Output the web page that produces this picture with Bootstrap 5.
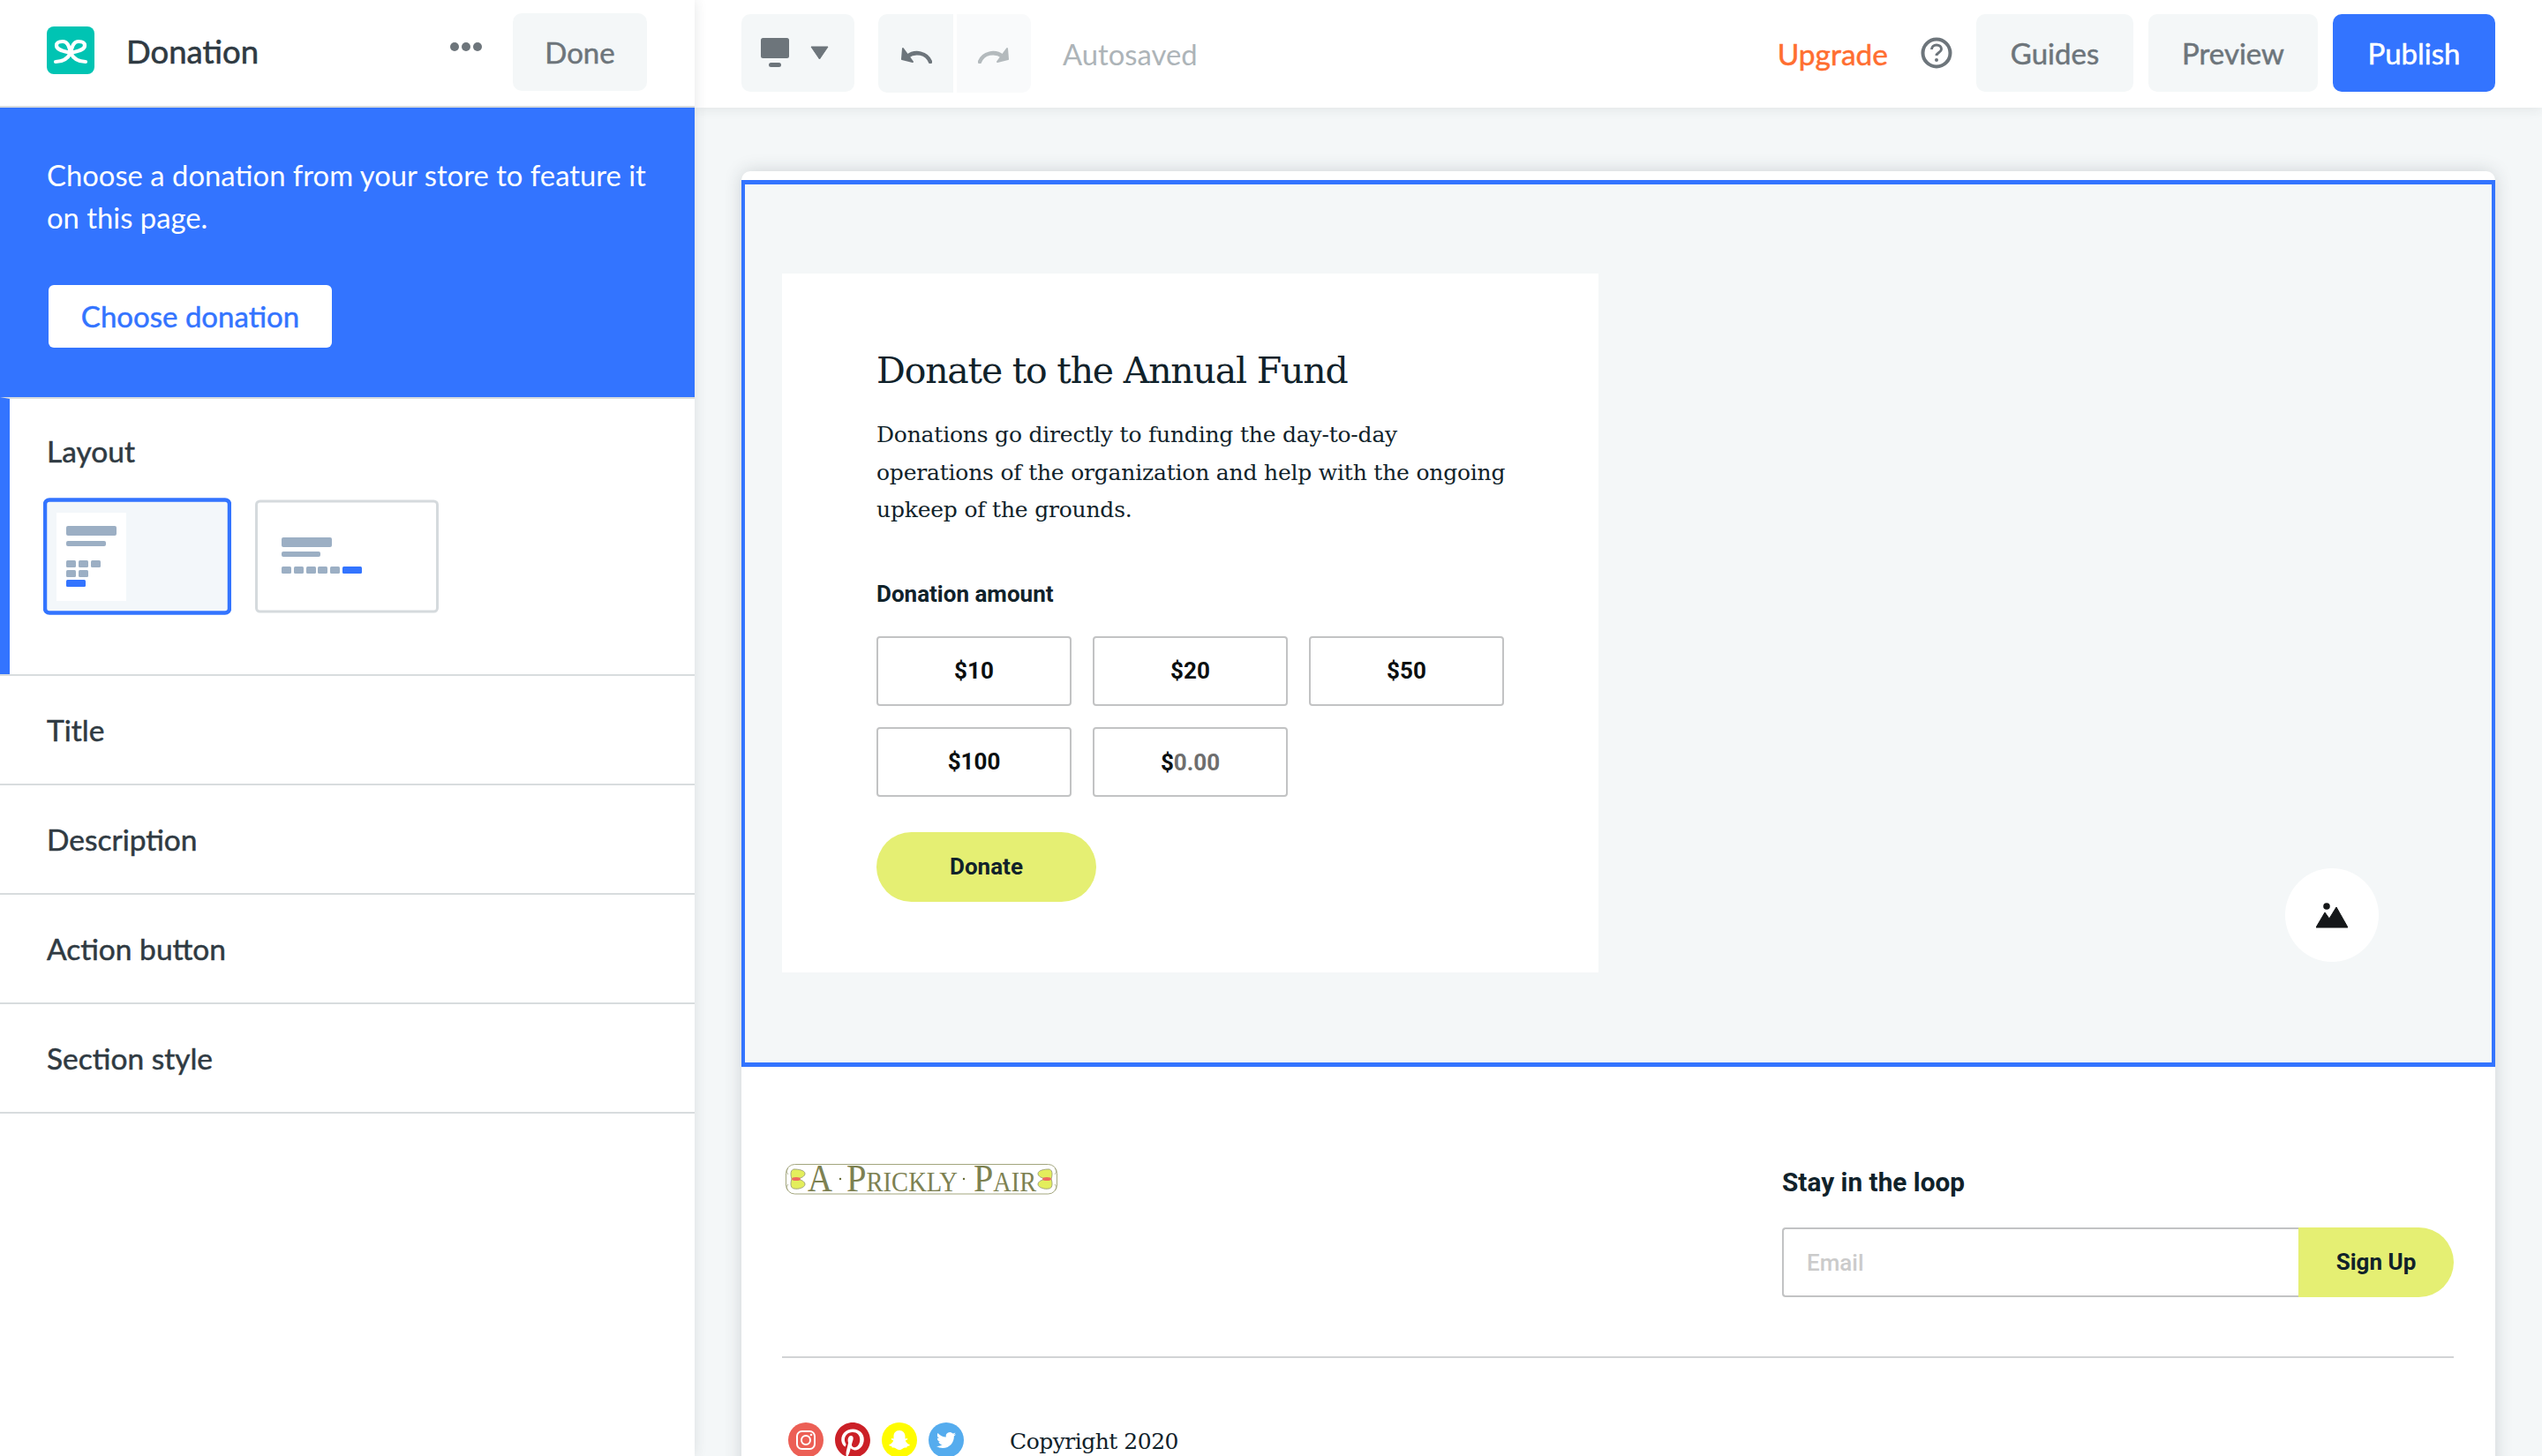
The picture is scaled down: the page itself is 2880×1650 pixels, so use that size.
<!doctype html>
<html lang="en">
<head>
<meta charset="utf-8">
<title>Donation</title>
<link href="https://cdn.jsdelivr.net/npm/bootstrap@5.3.0/dist/css/bootstrap.min.css" rel="stylesheet">
<style>
html,body{height:100%;}
body{width:2880px;height:1650px;overflow:hidden;background:#f4f7f8;font-family:Lato,"Liberation Sans",sans-serif;color:#2f3a42;}
.app-side{width:787px;height:1650px;background:#fff;box-shadow:0 0 14px rgba(40,50,60,.12);z-index:3;flex:none;}
.side-head{height:122px;padding:15px 54px 0 53px;border-bottom:2px solid #d8dcde;}
.side-logo{width:54px;height:54px;margin-top:15px;border-radius:8px;background:#00c4b3;flex:none;}
.side-title{margin:13px 0 0 36px;font-size:36.5px;font-weight:400;line-height:60px;color:#2f3a42;-webkit-text-stroke:.6px #2f3a42;}
.more-dots{margin-right:35px;margin-top:8px;}
.gray-btn{background:#f4f7f8;border:0;color:#6d757b;font-size:33px;font-weight:400;height:88px;border-radius:10px;padding:2px 0 0;-webkit-text-stroke:.5px #6d757b;}
.gray-btn:hover{background:#f4f7f8;color:#6d757b;}
.done-btn{width:152px;}
.side-promo{background:#3374ff;color:#fff;height:328px;padding:53px 53px 0;}
.side-promo p{font-size:32.8px;line-height:47.5px;margin:0 0 53px;font-weight:400;white-space:nowrap;}
.choose-btn{background:#fff;border:0;color:#3374ff;width:321px;height:71px;font-size:33px;font-weight:400;border-radius:6px;padding:0;margin-left:2px;-webkit-text-stroke:.5px #3374ff;}
.choose-btn:hover{background:#fff;color:#3374ff;}
.side-row{height:124px;border-top:2px solid #d8dcde;padding:0 0 0 53px;display:flex;align-items:center;font-size:33.5px;font-weight:400;color:#2f3a42;-webkit-text-stroke:.5px #2f3a42;}
.side-row:last-child{border-bottom:2px solid #d8dcde;height:126px;}
.layout-row{height:314px;border-top:2px solid #d8dcde;border-left:11px solid #3374ff;padding:37px 0 0 42px;font-size:33.5px;font-weight:400;-webkit-text-stroke:.5px #2f3a42;}
.layout-label{line-height:44px;margin-bottom:31px;}
.thumb-wrap{gap:27px;margin-left:-4px;}
.thumb-wrap svg{display:block;}
.thumb-alt{margin-top:2px;}
.app-main{flex:1 1 auto;min-width:0;height:1650px;}
.top-bar{height:122px;background:#fff;padding:16px 53px 0;box-shadow:0 2px 12px rgba(40,50,60,.09);position:relative;z-index:2;}
.device-btn{width:128px;background:#f4f7f8;height:88px;border-radius:10px;padding:0 0 0 22px;gap:24px;}
.hist-grp{margin-left:27px;gap:4px;}
.undo-btn,.redo-btn{width:85px;height:89px;border:0;border-radius:10px 0 0 10px;background:#f4f7f8;padding:0;}
.redo-btn{width:84px;border-radius:0 10px 10px 0;background:#f9fafb;}
.undo-btn:hover{background:#f4f7f8;}.redo-btn:hover{background:#f9fafb;}
.auto-txt{margin-left:36px;font-size:32.8px;color:#adb4b8;line-height:92px;}
.upgrade{color:#ff6e30;font-size:33.5px;font-weight:400;margin-right:37px;line-height:90px;-webkit-text-stroke:.5px #ff6e30;}
.help-ico{margin-right:27px;margin-top:26px;display:block;}
.guides-btn{width:178px;margin-right:17px;}
.preview-btn{width:192px;margin-right:17px;}
.publish-btn{width:184px;height:88px;background:#3374ff;border:0;color:#fff;font-size:33px;font-weight:400;border-radius:10px;padding:2px 0 0;-webkit-text-stroke:.5px #fff;}
.publish-btn:hover{background:#3374ff;color:#fff;}
.canvas-wrap{padding:72px 53px 0;}
.site-page{background:#fff;border-radius:10px 10px 0 0;padding-top:10px;box-shadow:0 0 20px rgba(40,50,60,.18);height:1500px;}
.hero-sec{position:relative;height:1005px;background:#f4f7f8;border:solid #3374ff;border-width:5px 4px;padding:101px 0 0 42px;}
.don-card{width:925px;height:792px;background:#fff;padding:82px 106px 0 107px;}
.don-title{font-family:"DejaVu Serif",serif;font-size:41px;font-weight:400;line-height:56px;color:#10222a;margin:0 0 24px;letter-spacing:-1.2px;white-space:nowrap;}
.don-desc{font-family:"DejaVu Serif",serif;font-size:25px;line-height:42.6px;color:#10222a;margin:0 0 56px;letter-spacing:-.2px;white-space:nowrap;}
.don-label{font-family:Roboto,sans-serif;font-weight:700;font-size:26px;line-height:34px;color:#10222a;margin-bottom:31px;}
.amt-grid{display:grid;grid-template-columns:repeat(3,221px);grid-auto-rows:79px;gap:24px;}
.amt-box{border:2px solid #c2c3c4;border-radius:4px;font-family:Roboto,sans-serif;font-weight:700;font-size:26px;color:#0b0f10;display:flex;align-items:center;justify-content:center;background:#fff;}
.amt-custom{padding-top:2px;}
.amt-box em{font-style:normal;color:#6e6e6e;font-weight:700;}
.pill-btn{background:#e5ef73;border:0;color:#10222a;font-family:Roboto,sans-serif;font-weight:700;font-size:26px;border-radius:40px;padding:0;}
.pill-btn:hover{background:#e5ef73;color:#10222a;}
.donate-btn{width:249px;height:79px;margin-top:40px;}
.pic-btn{position:absolute;left:1745px;top:775px;width:106px;height:106px;border-radius:50%;background:#fff;display:flex;align-items:center;justify-content:center;}
.foot-top{padding:100px 47px 0 46px;height:328px;}
.brand-box{margin-left:4px;flex:none;}
.brand-box svg{display:block;overflow:visible;}
.brand-txt{font-family:"Liberation Serif",serif;font-variant:small-caps;font-size:44px;fill:#7d8152;}
.loop-box{width:761px;margin-top:10px;}
.loop-ttl{font-family:Roboto,sans-serif;font-weight:700;font-size:29.8px;line-height:38px;color:#10222a;margin:2px 0 32px;}
.loop-input{height:79px;border:2px solid #c2c3c4;border-right:0;border-radius:4px 0 0 4px;font-family:Roboto,sans-serif;font-size:26px;font-weight:500;padding:0 26px;}
.loop-input::placeholder{color:#cbcbcb;}
.signup-btn{width:176px;height:79px;border-radius:0 40px 40px 0!important;flex:none;}
.foot-rule{margin:0 47px 0 46px;border-top:2px solid #d2d4d5;}
.foot-end{padding:73px 0 0 53px;}
.soc-list{gap:13px;}
.soc-list svg{display:block;}
.copy-txt{font-family:"DejaVu Serif",serif;font-size:25px;color:#10222a;margin-left:52px;line-height:44px;letter-spacing:-.5px;}
</style>
</head>
<body class="d-flex">
<aside class="app-side">
  <div class="side-head d-flex align-items-start">
    <svg class="side-logo" viewBox="0 0 54 54" aria-hidden="true"><g fill="none" stroke="#fff" stroke-width="4.2" stroke-linecap="round"><path d="M27 30C20 28 11 27 11 21.5 11 17.5 15 17 18 17 23 17 25 21 27 30Z"/><path d="M27 30C34 28 43 27 43 21.5 43 17.5 39 17 36 17 31 17 29 21 27 30Z"/><path d="M27 30C24 36 19 40 10 40"/><path d="M27 30C30 36 35 40 44 40"/></g></svg>
    <h1 class="side-title">Donation</h1>
    <svg class="more-dots ms-auto" width="36" height="60" viewBox="0 0 36 60" aria-hidden="true"><g fill="#6d757b"><circle cx="5" cy="30" r="5"/><circle cx="18" cy="30" r="5"/><circle cx="31" cy="30" r="5"/></g></svg>
    <button class="btn gray-btn done-btn" type="button">Done</button>
  </div>
  <div class="side-promo">
    <p>Choose a donation from your store to feature it<br>on this page.</p>
    <button class="btn choose-btn" type="button">Choose donation</button>
  </div>
  <div class="layout-row">
    <div class="layout-label">Layout</div>
    <div class="d-flex thumb-wrap">
      <svg width="213" height="133" viewBox="0 0 213 133" aria-hidden="true">
        <rect x="2" y="2.500" width="209" height="128" rx="5" fill="#f3f7fa" stroke="#3374ff" stroke-width="4.500"/>
        <rect x="15" y="17" width="79" height="100" fill="#fff"/>
        <g fill="#9cafc4"><rect x="26" y="32" width="57" height="11" rx="2"/><rect x="26" y="49" width="45" height="6" rx="2"/>
        <rect x="26" y="71" width="11" height="8" rx="1.500"/><rect x="40" y="71" width="11" height="8" rx="1.500"/><rect x="54" y="71" width="11" height="8" rx="1.500"/>
        <rect x="26" y="82" width="11" height="8" rx="1.500"/><rect x="40" y="82" width="11" height="8" rx="1.500"/></g>
        <rect x="26" y="93" width="22" height="8" rx="1.500" fill="#3374ff"/>
      </svg>
      <svg class="thumb-alt" width="208" height="129" viewBox="0 0 208 129" aria-hidden="true">
        <rect x="1.500" y="2" width="205" height="125" rx="4" fill="#fff" stroke="#d5dadd" stroke-width="3"/>
        <g fill="#9cafc4"><rect x="30" y="43" width="57" height="11" rx="2"/><rect x="30" y="59" width="44" height="6" rx="2"/>
        <rect x="30" y="76" width="11" height="8" rx="1.500"/><rect x="44" y="76" width="11" height="8" rx="1.500"/><rect x="58" y="76" width="11" height="8" rx="1.500"/><rect x="71" y="76" width="11" height="8" rx="1.500"/><rect x="85" y="76" width="11" height="8" rx="1.500"/></g>
        <rect x="99" y="76" width="22" height="8" rx="1.500" fill="#3374ff"/>
      </svg>
    </div>
  </div>
  <div class="side-row">Title</div>
  <div class="side-row">Description</div>
  <div class="side-row">Action button</div>
  <div class="side-row">Section style</div>
</aside>
<main class="app-main">
  <div class="top-bar d-flex align-items-start">
    <div class="device-btn d-flex align-items-center">
      <svg width="32" height="34" viewBox="0 0 32 34" aria-hidden="true"><rect width="32" height="23" rx="2.500" fill="#6d757b"/><rect x="9" y="28" width="14" height="5" rx="2.500" fill="#6d757b"/></svg>
      <svg width="21" height="16" viewBox="0 0 21 16" aria-hidden="true"><path d="M1 1H20L10.500 15Z" fill="#6d757b" stroke="#6d757b" stroke-linejoin="round"/></svg>
    </div>
    <div class="hist-grp d-flex">
      <button class="btn undo-btn" type="button" aria-label="Undo"><svg width="36" height="20" viewBox="0 0 36 20"><path d="M34 18C30 8 17 5 8 12" fill="none" stroke="#6d757b" stroke-width="4.500" stroke-linecap="round"/><path d="M3 3 2 15 14 18Z" fill="#6d757b" stroke="#6d757b" stroke-width="2" stroke-linejoin="round"/></svg></button>
      <button class="btn redo-btn" type="button" aria-label="Redo"><svg width="36" height="20" viewBox="0 0 36 20"><path d="M2 18C6 8 19 5 28 12" fill="none" stroke="#b4babd" stroke-width="4.500" stroke-linecap="round"/><path d="M33 3 34 15 22 18Z" fill="#b4babd" stroke="#b4babd" stroke-width="2" stroke-linejoin="round"/></svg></button>
    </div>
    <span class="auto-txt">Autosaved</span>
    <span class="upgrade ms-auto">Upgrade</span>
    <svg class="help-ico" width="36" height="36" viewBox="0 0 36 36" aria-hidden="true"><circle cx="18" cy="18" r="15.500" fill="none" stroke="#6d757b" stroke-width="4"/><path d="M12.500 14c0-3.200 2.500-5 5.500-5s5.500 1.800 5.500 4.800c0 3.700-5.500 3.700-5.500 7.200" fill="none" stroke="#6d757b" stroke-width="3"/><circle cx="18" cy="26" r="2" fill="#6d757b"/></svg>
    <button class="btn gray-btn guides-btn" type="button">Guides</button>
    <button class="btn gray-btn preview-btn" type="button">Preview</button>
    <button class="btn publish-btn" type="button">Publish</button>
  </div>
  <div class="canvas-wrap">
    <div class="site-page">
      <section class="hero-sec">
        <div class="don-card">
          <h2 class="don-title">Donate to the Annual Fund</h2>
          <p class="don-desc">Donations go directly to funding the day-to-day<br>operations of the organization and help with the ongoing<br>upkeep of the grounds.</p>
          <div class="don-label">Donation amount</div>
          <div class="amt-grid">
            <div class="amt-box">$10</div><div class="amt-box">$20</div><div class="amt-box">$50</div>
            <div class="amt-box">$100</div><div class="amt-box amt-custom">$<em>0.00</em></div>
          </div>
          <button class="btn pill-btn donate-btn" type="button">Donate</button>
        </div>
        <div class="pic-btn"><svg width="36" height="29" viewBox="0 0 36 29" aria-hidden="true"><circle cx="12" cy="4" r="3.800" fill="#151719"/><path d="M0 28 10 11 15 18 23 5 36 28Z" fill="#151719" stroke="#151719" stroke-linejoin="round"/></svg></div>
      </section>
      <div class="foot-top d-flex justify-content-between align-items-start">
        <div class="brand-box">
          <svg width="308" height="55" viewBox="0 -10 308 55" role="img" aria-label="A Prickly Pair">
            <rect x=".5" y=".5" width="307" height="33.500" rx="10" fill="#fff" stroke="#a3a67e"/>
            <defs><g id="flyWing"><path d="M3 5C1 7 1 10 3 12M3 23C1 25 1 28 3 30" fill="none" stroke="#a3a67e"/><path d="M7 17C5 11 6 6 10 6 14 6 22 7 22 11 22 14 18 16 13 17 18 18 22 20 22 23 22 27 14 29 10 28 6 28 5 23 7 17Z" fill="#e3ee5c" stroke="#a3a67e"/><ellipse cx="12" cy="17" rx="5" ry="2" fill="#ee6a5e"/></g></defs>
            <use href="#flyWing"/>
            <use href="#flyWing" transform="translate(308 0) scale(-1 1)"/>
            <text class="brand-txt" x="25" y="31" textLength="28" lengthAdjust="spacingAndGlyphs">A</text>
            <circle cx="62" cy="17" r="1.200" fill="#676b35"/>
            <text class="brand-txt" x="69" y="31" textLength="126" lengthAdjust="spacingAndGlyphs">Prickly</text>
            <circle cx="202" cy="17" r="1.200" fill="#676b35"/>
            <text class="brand-txt" x="213" y="31" textLength="71" lengthAdjust="spacingAndGlyphs">Pair</text>
          </svg>
        </div>
        <div class="loop-box">
          <div class="loop-ttl">Stay in the loop</div>
          <div class="input-group flex-nowrap">
            <input class="form-control loop-input" type="text" placeholder="Email" aria-label="Email">
            <button class="btn pill-btn signup-btn" type="button">Sign Up</button>
          </div>
        </div>
      </div>
      <div class="foot-rule"></div>
      <div class="foot-end d-flex align-items-start">
        <div class="d-flex soc-list">
          <svg width="40" height="40" viewBox="0 0 40 40" aria-hidden="true"><circle cx="20" cy="20" r="20" fill="#ec5f55"/><rect x="10" y="10" width="20" height="20" rx="5.500" fill="none" stroke="#fff" stroke-width="2"/><circle cx="20" cy="20" r="5" fill="none" stroke="#fff" stroke-width="2"/><circle cx="26" cy="14" r="1.300" fill="#fff"/></svg>
          <svg width="40" height="40" viewBox="0 0 24 24" aria-hidden="true"><circle cx="12" cy="12" r="12" fill="#fff"/><path fill="#cb2027" d="M12.017 0C5.396 0 .029 5.367.029 11.987c0 5.079 3.158 9.417 7.618 11.162-.105-.949-.199-2.403.041-3.439.219-.937 1.406-5.957 1.406-5.957s-.359-.72-.359-1.781c0-1.663.967-2.911 2.168-2.911 1.024 0 1.518.769 1.518 1.688 0 1.029-.653 2.567-.992 3.992-.285 1.193.6 2.165 1.775 2.165 2.128 0 3.768-2.245 3.768-5.487 0-2.861-2.063-4.869-5.008-4.869-3.41 0-5.409 2.562-5.409 5.199 0 1.033.394 2.143.889 2.741.099.12.112.225.085.345-.09.375-.293 1.199-.334 1.363-.053.225-.172.271-.401.165-1.495-.69-2.433-2.878-2.433-4.646 0-3.776 2.748-7.252 7.92-7.252 4.158 0 7.392 2.967 7.392 6.923 0 4.135-2.607 7.462-6.233 7.462-1.214 0-2.354-.629-2.758-1.379l-.749 2.848c-.269 1.045-1.004 2.352-1.498 3.146 1.123.345 2.306.535 3.55.535 6.607 0 11.985-5.365 11.985-11.987C23.97 5.39 18.592.026 11.985.026L12.017 0z"/></svg>
          <svg width="40" height="40" viewBox="0 0 40 40" aria-hidden="true"><circle cx="20" cy="20" r="20" fill="#fffc00"/><path fill="#fff" d="M20 9c4 0 6.500 3 6.500 6.500v3l2-.5c1 0 1 1 .3 1.500l-2 1c.7 2 2.500 4 5 4.700.4.8-1.500 1.500-3 1.800l-.5 1.500c-1.500-.2-3-.2-4.300 1-1.200.8-2.300 1.500-4 1.500s-2.800-.7-4-1.500c-1.300-1.200-2.800-1.200-4.300-1l-.5-1.500c-1.500-.3-3.400-1-3-1.800 2.500-.7 4.300-2.700 5-4.700l-2-1c-.7-.5-.7-1.500.3-1.500l2 .5v-3C13.500 12 16 9 20 9z"/></svg>
          <svg width="40" height="40" viewBox="0 0 40 40" aria-hidden="true"><circle cx="20" cy="20" r="20" fill="#55acee"/><g transform="translate(9 9) scale(.92)"><path fill="#fff" d="M23.953 4.570a10 10 0 01-2.825.775 4.958 4.958 0 002.163-2.723c-.951.555-2.005.959-3.127 1.184a4.920 4.920 0 00-8.384 4.482C7.690 8.095 4.067 6.130 1.640 3.162a4.822 4.822 0 00-.666 2.475c0 1.710.870 3.213 2.188 4.096a4.904 4.904 0 01-2.228-.616v.060a4.923 4.923 0 003.946 4.827 4.996 4.996 0 01-2.212.085 4.936 4.936 0 004.604 3.417 9.867 9.867 0 01-6.102 2.105c-.390 0-.779-.023-1.170-.067a13.995 13.995 0 007.557 2.209c9.053 0 13.998-7.496 13.998-13.985 0-.210 0-.420-.015-.630A9.935 9.935 0 0024 4.590z"/></g></svg>
        </div>
        <span class="copy-txt">Copyright 2020</span>
      </div>
    </div>
  </div>
</main>
<script src="https://cdn.jsdelivr.net/npm/bootstrap@5.3.0/dist/js/bootstrap.bundle.min.js"></script>
</body>
</html>
